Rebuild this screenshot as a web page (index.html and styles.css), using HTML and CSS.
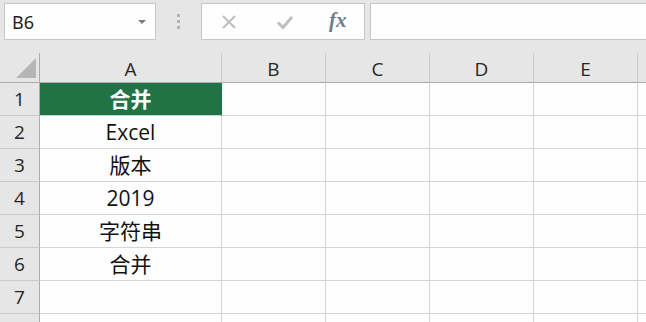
FILE: index.html
```html
<!DOCTYPE html>
<html lang="zh">
<head>
<meta charset="utf-8">
<link rel="stylesheet" href="styles.css">
</head>
<body>
<div class="app">
  <div class="toolbar">
    <div class="namebox">
      <span class="name">B6</span>
      <span class="dropdown"></span>
    </div>
    <div class="grip"><i></i><i></i><i></i></div>
    <div class="fxbox">
      <svg class="ico" width="16" height="16" viewBox="0 0 16 16"><path d="M2 2 L14 14 M14 2 L2 14" stroke="#bfbfbf" stroke-width="2" fill="none"/></svg>
      <svg class="ico" width="18" height="16" viewBox="0 0 18 16"><path d="M2 8.5 L7 13.5 L16 3" stroke="#bfbfbf" stroke-width="3" fill="none"/></svg>
      <span class="fx">fx</span>
    </div>
    <div class="formula"></div>
  </div>
  <div class="sheet">
    <div class="corner"><svg width="22" height="22" viewBox="0 0 22 22"><path d="M1 21 L21 1 L21 21 Z" fill="#b5b5b5"/></svg></div>
    <div class="colh">A</div>
    <div class="colh">B</div>
    <div class="colh">C</div>
    <div class="colh">D</div>
    <div class="colh">E</div>
    <div class="colh last"></div>

    <div class="rowh">1</div><div class="cell head">合并</div><div class="cell"></div><div class="cell"></div><div class="cell"></div><div class="cell"></div><div class="cell"></div>
    <div class="rowh">2</div><div class="cell">Excel</div><div class="cell"></div><div class="cell"></div><div class="cell"></div><div class="cell"></div><div class="cell"></div>
    <div class="rowh">3</div><div class="cell">版本</div><div class="cell"></div><div class="cell"></div><div class="cell"></div><div class="cell"></div><div class="cell"></div>
    <div class="rowh">4</div><div class="cell">2019</div><div class="cell"></div><div class="cell"></div><div class="cell"></div><div class="cell"></div><div class="cell"></div>
    <div class="rowh">5</div><div class="cell">字符串</div><div class="cell"></div><div class="cell"></div><div class="cell"></div><div class="cell"></div><div class="cell"></div>
    <div class="rowh">6</div><div class="cell">合并</div><div class="cell"></div><div class="cell"></div><div class="cell"></div><div class="cell"></div><div class="cell"></div>
    <div class="rowh">7</div><div class="cell"></div><div class="cell"></div><div class="cell"></div><div class="cell"></div><div class="cell"></div><div class="cell"></div>
    <div class="rowh"></div><div class="cell"></div><div class="cell"></div><div class="cell"></div><div class="cell"></div><div class="cell"></div><div class="cell"></div>
  </div>
</div>
</body>
</html>
```
FILE: styles.css
```css
* { box-sizing: border-box; }
html, body { margin: 0; padding: 0; }
body {
  width: 646px;
  height: 322px;
  overflow: hidden;
  background: #e6e6e6;
  font-family: "Open Sans", "Noto Sans CJK SC", sans-serif;
}
.app { width: 646px; }

.toolbar {
  height: 53px;
  display: flex;
  align-items: flex-start;
  padding: 3px 0 0 4px;
  background: #e6e6e6;
}
.namebox {
  width: 152px;
  height: 37px;
  background: #fefefe;
  border: 1px solid #c6c6c6;
  display: flex;
  align-items: center;
  justify-content: space-between;
  padding: 0 9px 0 7px;
}
.name {
  font-size: 18px;
  color: #1e1e1e;
  font-family: "Noto Sans", sans-serif;
}
.dropdown {
  width: 0;
  height: 0;
  border-left: 4px solid transparent;
  border-right: 4px solid transparent;
  border-top: 4px solid #7a7a7a;
  margin-top: 1px;
}
.grip {
  width: 45px;
  height: 37px;
  display: flex;
  flex-direction: column;
  align-items: center;
  justify-content: center;
  gap: 3px;
}
.grip i {
  display: block;
  width: 3px;
  height: 3px;
  background: #b3b3b3;
}
.fxbox {
  width: 164px;
  height: 37px;
  background: #fefefe;
  border: 1px solid #c6c6c6;
  display: flex;
  align-items: center;
  padding: 0 0 0 19px;
}
.fxbox .ico { flex: none; }
.fxbox .ico:nth-child(1) { margin-right: 39px; }
.fxbox .ico:nth-child(2) { margin-right: 35px; }
.fx {
  font-family: "Liberation Serif", serif;
  font-style: italic;
  font-weight: bold;
  font-size: 21px;
  color: #6d7f8c;
  margin-top: -3px;
}
.formula {
  margin-left: 5px;
  flex: 1;
  height: 37px;
  background: #fefefe;
  border: 1px solid #c6c6c6;
  border-right: none;
}

.sheet {
  display: grid;
  grid-template-columns: 40px 182px 104px 104px 104px 104px 8px;
  grid-template-rows: 30px repeat(8, 33px);
  background: #fefefe;
}
.corner {
  background: #e6e6e6;
  border-right: 1px solid #ababab;
  border-bottom: 1px solid #ababab;
  display: flex;
  align-items: flex-end;
  justify-content: flex-end;
  padding: 0 2px 3px 0;
}
.corner svg { display: block; }
.colh {
  background: #e6e6e6;
  border-bottom: 1px solid #ababab;
  border-right: 1px solid #c9c9c9;
  font-size: 19px;
  color: #262626;
  display: flex;
  align-items: center;
  justify-content: center;
  padding-top: 3px;
  line-height: 1;
}
.colh.last { border-right: none; }
.rowh {
  background: #e6e6e6;
  border-right: 1px solid #ababab;
  border-bottom: 1px solid #c9c9c9;
  font-size: 19px;
  color: #262626;
  display: flex;
  align-items: center;
  justify-content: center;
  line-height: 1;
}
.cell {
  border-right: 1px solid #d4d4d4;
  border-bottom: 1px solid #d4d4d4;
  font-size: 21px;
  color: #111;
  display: flex;
  align-items: center;
  justify-content: center;
  line-height: 1;
  white-space: nowrap;
}
.cell:nth-child(7n) { border-right: none; }
.cell.head {
  background: #217346;
  border-right-color: #217346;
  color: #fff;
  font-weight: bold;
}
```
